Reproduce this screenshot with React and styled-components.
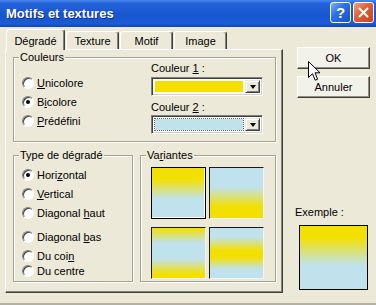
import React from 'react';
import styled, { createGlobalStyle } from 'styled-components';

const YELLOW = '#f3e000';
const BLUE = '#c0e2ec';

const GlobalStyle = createGlobalStyle`
  html, body {
    margin: 0;
    padding: 0;
    background: #ece9d8;
  }
  body {
    font-family: 'Liberation Sans', Arial, sans-serif;
    font-size: 11px;
    color: #000;
  }
`;

const Window = styled.div`
  position: relative;
  width: 376px;
  height: 305px;
  overflow: hidden;
  background: #ece9d8;
  display: flex;
  flex-direction: column;
  box-sizing: border-box;
  border-bottom: 2px solid #b4b1a3;
`;

const TitleBar = styled.div`
  height: 27px;
  flex: none;
  display: flex;
  align-items: center;
  padding: 0 2px 0 6px;
  background: linear-gradient(180deg, #4a8af0 0%, #2563d8 12%, #1656cf 55%, #1a5bd6 88%, #0e45b2 100%);
`;

const Title = styled.div`
  flex: 1;
  color: #fff;
  font-weight: bold;
  font-size: 13px;
  text-shadow: 1px 1px 0 #0b2f80;
  padding-bottom: 1px;
`;

const CaptionButton = styled.div`
  width: 19px;
  height: 19px;
  margin-left: 2px;
  margin-top: -2px;
  border: 1px solid #fff;
  border-radius: 3px;
  display: flex;
  align-items: center;
  justify-content: center;
  color: #fff;
  font-weight: bold;
  font-size: 15px;
  background: ${(p) =>
    p.$close
      ? 'linear-gradient(135deg, #f0a58a 0%, #e2623e 40%, #c7401f 100%)'
      : 'linear-gradient(135deg, #7fb0fa 0%, #2f6fea 40%, #1a4fcf 100%)'};
`;

const Body = styled.div`
  flex: 1;
  display: flex;
  padding: 2px 0 0 5px;
`;

const LeftCol = styled.div`
  width: 278px;
  display: flex;
  flex-direction: column;
`;

const TabRow = styled.div`
  display: flex;
  align-items: flex-end;
  height: 20px;
  padding-left: 1px;
`;

const Tab = styled.div`
  position: relative;
  z-index: ${(p) => (p.$active ? 1 : 0)};
  box-sizing: border-box;
  width: ${(p) => p.$w}px;
  height: ${(p) => (p.$active ? 21 : 18)}px;
  margin-right: 1px;
  margin-bottom: ${(p) => (p.$active ? -1 : 0)}px;
  padding-top: ${(p) => (p.$active ? 5 : 3)}px;
  line-height: 12px;
  text-align: center;
  background: #ece9d8;
  border-top: 1px solid #fff;
  border-left: 1px solid #fff;
  border-right: 1px solid #404040;
  border-radius: 3px 3px 0 0;
  box-shadow: inset -1px 0 0 #808080;
`;

const Panel = styled.div`
  box-sizing: border-box;
  width: 278px;
  height: 244px;
  padding: 1px 6px 0 7px;
  display: flex;
  flex-direction: column;
  gap: 7px;
  border: 1px solid;
  border-color: #fff #404040 #404040 #fff;
  box-shadow: inset -1px -1px 0 #808080;
`;

const Group = styled.fieldset`
  box-sizing: border-box;
  margin: 0;
  padding: 0;
  min-width: 0;
  height: ${(p) => p.$h}px;
  width: ${(p) => (p.$w ? `${p.$w}px` : 'auto')};
  flex: ${(p) => (p.$grow ? '1' : 'none')};
  border: 1px solid #a5a293;
  box-shadow: inset 1px 1px 0 #fff, 1px 1px 0 #fff;
  display: flex;
  flex-direction: ${(p) => p.$dir || 'column'};
`;

const Legend = styled.legend`
  margin-left: 5px;
  padding: 0 1px;
  line-height: 12px;
  background: #ece9d8;
`;

const GroupsRow = styled.div`
  display: flex;
  gap: 7px;
`;

const RadioCol = styled.div`
  flex: 1;
  display: flex;
  flex-direction: column;
  padding: ${(p) => (p.$top ?? 0)}px 0 0 8px;
`;

const RadioRow = styled.div`
  display: flex;
  align-items: center;
  gap: 3px;
  height: ${(p) => p.$h || 19}px;
  margin-top: ${(p) => p.$mt || 0}px;
`;

const RadioCircle = styled.span`
  box-sizing: border-box;
  width: 12px;
  height: 12px;
  flex: none;
  border-radius: 50%;
  background: #fff;
  border: 1px solid;
  border-color: #808080 #fff #fff #808080;
  box-shadow: inset 1px 1px 0 #404040;
  display: flex;
  align-items: center;
  justify-content: center;

  &::after {
    content: '';
    width: 4px;
    height: 4px;
    border-radius: 50%;
    background: ${(p) => (p.$checked ? '#000' : 'transparent')};
  }
`;

const Key = styled.span`
  text-decoration: underline;
  text-underline-offset: 1px;
`;

const ComboCol = styled.div`
  width: 112px;
  margin: -1px 12px 0 0;
  display: flex;
  flex-direction: column;
`;

const Label = styled.div`
  line-height: 12px;
  margin-top: ${(p) => p.$mt || 0}px;
  margin-bottom: ${(p) => p.$mb || 0}px;
`;

const Combo = styled.div`
  box-sizing: border-box;
  height: 19px;
  display: flex;
  align-items: stretch;
  padding: 2px;
  background: #fff;
  border: 1px solid;
  border-color: #808080 #fff #fff #808080;
  box-shadow: inset 1px 1px 0 #404040, inset -1px -1px 0 #d4d0c8;
`;

const Swatch = styled.div`
  flex: 1;
  margin: 1px 2px 1px 1px;
  background: ${(p) => p.$color};
  outline: ${(p) => (p.$focus ? '1px dotted #6a6a6a' : 'none')};
  outline-offset: 0;
`;

const DropButton = styled.div`
  box-sizing: border-box;
  width: 15px;
  background: #ece9d8;
  border: 1px solid;
  border-color: #ece9d8 #404040 #404040 #ece9d8;
  box-shadow: inset 1px 1px 0 #fff, inset -1px -1px 0 #808080;
  display: flex;
  align-items: center;
  justify-content: center;

  &::after {
    content: '';
    border-left: 3px solid transparent;
    border-right: 3px solid transparent;
    border-top: 4px solid #000;
  }
`;

const TileGrid = styled.div`
  display: grid;
  grid-template-columns: 55px 55px;
  grid-auto-rows: 52px;
  column-gap: 3px;
  row-gap: 8px;
  padding: 6px 0 0 10px;
`;

const Tile = styled.div`
  box-sizing: border-box;
  background: ${(p) => p.$bg};
  border: 1px solid;
  border-color: ${(p) => (p.$selected ? '#000' : '#1a1a1a #f4f4f4 #f4f4f4 #1a1a1a')};
  box-shadow: ${(p) => (p.$selected ? 'inset -1px -1px 0 #fff' : 'none')};
`;

const RightCol = styled.div`
  flex: 1;
  display: flex;
  flex-direction: column;
  padding: 18px 0 0 14px;
`;

const Button = styled.div`
  box-sizing: border-box;
  width: 73px;
  height: 22px;
  margin-bottom: ${(p) => p.$mb || 0}px;
  display: flex;
  align-items: center;
  justify-content: center;
  background: #f2f1ea;
  border: 1px solid;
  border-color: #fff #404040 #404040 #fff;
  box-shadow: inset -1px -1px 0 #8f8d80;
`;

const ExampleBlock = styled.div`
  margin: 108px 0 0 -2px;
  display: flex;
  flex-direction: column;
`;

const ExampleBox = styled.div`
  box-sizing: border-box;
  width: 69px;
  height: 65px;
  margin: 7px 0 0 4px;
  border: 1px solid #000;
  background: ${(p) => p.$bg};
`;

const Cursor = styled.svg`
  position: absolute;
  left: 308px;
  top: 61px;
`;

const grad = (stops) => `linear-gradient(180deg, ${stops})`;

const tiles = [
  { bg: grad(`${YELLOW} 0%, ${YELLOW} 22%, ${BLUE} 62%, ${BLUE} 100%`), selected: true },
  { bg: grad(`${BLUE} 0%, ${BLUE} 38%, ${YELLOW} 78%, ${YELLOW} 100%`) },
  { bg: grad(`${YELLOW} 0%, ${BLUE} 30%, ${BLUE} 62%, ${YELLOW} 92%, ${YELLOW} 100%`) },
  { bg: grad(`${BLUE} 0%, ${BLUE} 18%, ${YELLOW} 45%, ${YELLOW} 58%, ${BLUE} 82%, ${BLUE} 100%`) },
];

const types = [
  { label: <>Hori<Key>z</Key>ontal</>, mt: 7, checked: true },
  { label: <><Key>V</Key>ertical</>, mt: 5 },
  { label: <>Diagonal <Key>h</Key>aut</>, mt: 5 },
  { label: <>Diagonal <Key>b</Key>as</>, mt: 10 },
  { label: <>Du coi<Key>n</Key></>, mt: 5 },
  { label: <>Du centre</>, mt: 1 },
];

const App = () => {
  return (
    <Window>
      <GlobalStyle />
      <TitleBar>
        <Title>Motifs et textures</Title>
        <CaptionButton>?</CaptionButton>
        <CaptionButton $close>
          <svg width="11" height="11" viewBox="0 0 11 11">
            <path d="M1.5 1.5 L9.5 9.5 M9.5 1.5 L1.5 9.5" stroke="#fff" strokeWidth="2" strokeLinecap="round" />
          </svg>
        </CaptionButton>
      </TitleBar>

      <Body>
        <LeftCol>
          <TabRow>
            <Tab $active $w={59}>Dégradé</Tab>
            <Tab $w={53}>Texture</Tab>
            <Tab $w={53}>Motif</Tab>
            <Tab $w={53}>Image</Tab>
          </TabRow>
          <Panel>
            <Group $h={91} $dir="row">
              <Legend>Couleurs</Legend>
              <RadioCol $top={10}>
                <RadioRow>
                  <RadioCircle />
                  <span><Key>U</Key>nicolore</span>
                </RadioRow>
                <RadioRow>
                  <RadioCircle $checked />
                  <span>B<Key>i</Key>colore</span>
                </RadioRow>
                <RadioRow>
                  <RadioCircle />
                  <span><Key>P</Key>rédéfini</span>
                </RadioRow>
              </RadioCol>
              <ComboCol>
                <Label $mb={3}>Couleur <Key>1</Key> :</Label>
                <Combo>
                  <Swatch $color={YELLOW} />
                  <DropButton />
                </Combo>
                <Label $mt={5} $mb={2}>Couleur <Key>2</Key> :</Label>
                <Combo>
                  <Swatch $color={BLUE} $focus />
                  <DropButton />
                </Combo>
              </ComboCol>
            </Group>

            <GroupsRow>
              <Group $h={133} $w={120}>
                <Legend>Type de dégradé</Legend>
                <RadioCol>
                  {types.map((t, i) => (
                    <RadioRow key={i} $h={14} $mt={t.mt}>
                      <RadioCircle $checked={t.checked} />
                      <span>{t.label}</span>
                    </RadioRow>
                  ))}
                </RadioCol>
              </Group>
              <Group $h={133} $grow>
                <Legend>Va<Key>r</Key>iantes</Legend>
                <TileGrid>
                  {tiles.map((t, i) => (
                    <Tile key={i} $bg={t.bg} $selected={t.selected} />
                  ))}
                </TileGrid>
              </Group>
            </GroupsRow>
          </Panel>
        </LeftCol>

        <RightCol>
          <Button $mb={7}>OK</Button>
          <Button>Annuler</Button>
          <ExampleBlock>
            <Label>Exemple :</Label>
            <ExampleBox $bg={grad(`${YELLOW} 0%, ${YELLOW} 18%, ${BLUE} 62%, ${BLUE} 100%`)} />
          </ExampleBlock>
        </RightCol>
      </Body>

      <Cursor width="13" height="21" viewBox="0 0 13 21">
        <path d="M0.5 0.5 L0.5 16.5 L4.5 12.7 L7.2 19.2 L9.6 18.2 L7 11.8 L12 11.8 Z" fill="#fff" stroke="#000" strokeWidth="1" strokeLinejoin="miter" />
      </Cursor>
    </Window>
  );
};

export default App;
